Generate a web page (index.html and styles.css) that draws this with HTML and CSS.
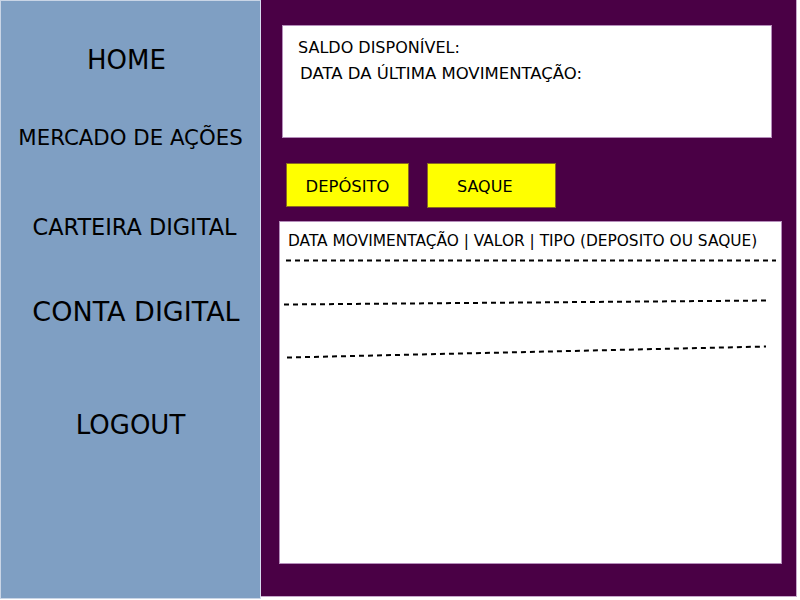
FILE: index.html
```html
<!DOCTYPE html>
<html lang="pt">
<head>
<meta charset="utf-8">
<title>Conta Digital</title>
<link rel="stylesheet" href="styles.css">
</head>
<body>
<div class="app">
  <nav class="sidebar">
    <div class="nav-item home">HOME</div>
    <div class="nav-item mercado">MERCADO DE AÇÕES</div>
    <div class="nav-item carteira">CARTEIRA DIGITAL</div>
    <div class="nav-item conta">CONTA DIGITAL</div>
    <div class="nav-item logout">LOGOUT</div>
  </nav>
  <main class="main">
    <section class="summary">
      <div class="saldo">SALDO DISPONÍVEL:</div>
      <div class="data">DATA DA ÚLTIMA MOVIMENTAÇÃO:</div>
    </section>
    <div class="actions">
      <div class="btn deposito">DEPÓSITO</div>
      <div class="btn saque">SAQUE</div>
    </div>
    <section class="history">
      <div class="history-head">DATA MOVIMENTAÇÃO | VALOR | TIPO (DEPOSITO OU SAQUE)</div>
      <svg class="rules" width="502" height="150" viewBox="0 0 502 150">
        <line x1="6" y1="18.5" x2="496" y2="18.5" />
        <line x1="4" y1="62.5" x2="489" y2="58.5" />
        <line x1="7" y1="115.5" x2="486" y2="104.5" />
      </svg>
    </section>
  </main>
</div>
</body>
</html>
```
FILE: styles.css
```css
html, body {
  margin: 0;
  padding: 0;
  background: #ffffff;
}
body {
  font-family: "DejaVu Sans", sans-serif;
  color: #000;
}
.app {
  display: flex;
  width: 800px;
  height: 600px;
}
.sidebar {
  box-sizing: border-box;
  width: 261px;
  height: 599px;
  background: #7f9fc3;
  border: 1px solid #c9d5e6;
  border-right: 1px solid #d8dcef;
  display: flex;
  flex-direction: column;
  align-items: center;
  padding-top: 44px;
}
.nav-item {
  line-height: 30px;
  height: 30px;
  white-space: nowrap;
}
.home { font-size: 26px; margin-right: 8px; }
.mercado { font-size: 21.3px; margin-top: 48px; }
.carteira { font-size: 22.4px; margin-top: 59px; margin-left: 8px; }
.conta { font-size: 27px; margin-top: 55px; margin-left: 11px; }
.logout { font-size: 26px; margin-top: 83px; }

.main {
  box-sizing: border-box;
  width: 536px;
  height: 597px;
  background: #4a0045;
  border-right: 1px solid #c7a8cc;
  border-bottom: 1px solid #c7a8cc;
  display: flex;
  flex-direction: column;
  align-items: flex-start;
}
.summary {
  box-sizing: border-box;
  margin: 25px 0 0 21px;
  width: 490px;
  height: 113px;
  background: #fff;
  border: 1px solid #b58ebb;
  padding: 12px 0 0 15px;
}
.saldo { line-height: 20px; font-size: 16px; }
.data { line-height: 20px; margin: 6px 0 0 2px; font-size: 16.5px; }

.actions {
  display: flex;
  gap: 18px;
  margin: 25px 0 0 25px;
}
.btn {
  box-sizing: border-box;
  background: #ffff00;
  border: 1px solid #8a6a20;
  display: flex;
  align-items: center;
}
.deposito {
  width: 123px;
  height: 44px;
  justify-content: center;
  padding-top: 2px;
  font-size: 16.4px;
}
.saque {
  width: 129px;
  height: 45px;
  padding: 2px 0 0 29px;
  font-size: 16px;
}
.history {
  box-sizing: border-box;
  margin: 13px 0 0 18px;
  width: 503px;
  height: 343px;
  background: #fff;
  border: 1px solid #b58ebb;
  font-size: 15.4px;
}
.history-head {
  padding: 9px 0 0 8px;
  line-height: 20px;
  white-space: nowrap;
}
.rules {
  display: block;
  margin-top: -9px;
}
.rules line {
  stroke: #000;
  stroke-width: 2;
  stroke-dasharray: 5 4;
}
```
